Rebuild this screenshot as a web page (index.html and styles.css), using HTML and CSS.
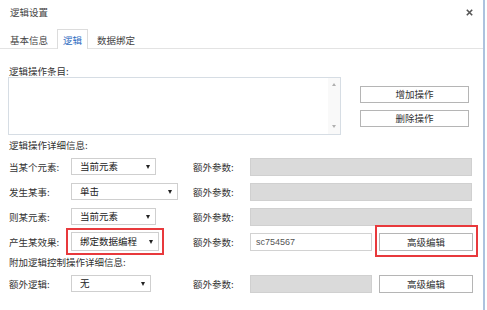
FILE: index.html
```html
<!DOCTYPE html>
<html>
<head>
<meta charset="utf-8">
<link rel="stylesheet" href="styles.css">
</head>
<body>
<div class="dialog">
  <div class="header">
    <span class="title">逻辑设置</span>
    <span class="close"><svg width="7" height="7" viewBox="0 0 7 7"><path d="M0.8 0.8L6.2 6.2M6.2 0.8L0.8 6.2" stroke="#555" stroke-width="1.6" fill="none"/></svg></span>
  </div>
  <div class="tabs">
    <div class="tab">基本信息</div>
    <div class="tab active">逻辑</div>
    <div class="tab">数据绑定</div>
  </div>
  <div class="content">
    <div class="label sec1">逻辑操作条目:</div>
    <div class="ops">
      <div class="listbox">
        <div class="scroll"><span class="up"></span><span class="down"></span></div>
      </div>
      <div class="opbtns">
        <div class="btn opbtn">增加操作</div>
        <div class="btn opbtn">删除操作</div>
      </div>
    </div>
    <div class="label sec2">逻辑操作详细信息:</div>
    <div class="grid">
      <div class="label">当某个元素:</div>
      <div class="select w85">当前元素<span class="arrow"></span></div>
      <div class="label">额外参数:</div>
      <div class="field"><div class="input disabled full"></div></div>

      <div class="label">发生某事:</div>
      <div class="select w107">单击<span class="arrow"></span></div>
      <div class="label">额外参数:</div>
      <div class="field"><div class="input disabled full"></div></div>

      <div class="label">则某元素:</div>
      <div class="select w85">当前元素<span class="arrow"></span></div>
      <div class="label">额外参数:</div>
      <div class="field"><div class="input disabled full"></div></div>

      <div class="label">产生某效果:</div>
      <div class="select w88 tall marked-select">绑定数据编程<span class="arrow"></span></div>
      <div class="label">额外参数:</div>
      <div class="field">
        <div class="input half value">sc754567</div>
        <div class="btn edit marked-btn">高级编辑</div>
      </div>
    </div>
    <div class="label sec3">附加逻辑控制操作详细信息:</div>
    <div class="grid">
      <div class="label">额外逻辑:</div>
      <div class="select w80">无<span class="arrow"></span></div>
      <div class="label">额外参数:</div>
      <div class="field">
        <div class="input disabled half"></div>
        <div class="btn edit">高级编辑</div>
      </div>
    </div>
  </div>
</div>
</body>
</html>
```

FILE: styles.css
```css
html, body {
  margin: 0;
  padding: 0;
  background: #fff;
}

body {
  font-family: "Noto Sans CJK SC", "Noto Sans", sans-serif;
  font-size: 9.5px;
  color: #333;
}

.dialog {
  width: 483px;
  height: 310px;
  border-right: 2px solid #adc2de;
  overflow: hidden;
}

.header {
  height: 29px;
  box-sizing: border-box;
  padding: 6px 10px 0 10px;
  display: flex;
  justify-content: space-between;
  align-items: flex-start;
}

.title {
  line-height: 13px;
  color: #444;
}

.close {
  margin-top: 3px;
  width: 7px;
  height: 7px;
  display: block;
}

.close svg {
  display: block;
}

.tabs {
  height: 20px;
  box-sizing: border-box;
  border-bottom: 1px solid #e3e3e3;
  display: flex;
  gap: 3px;
  padding-left: 4px;
}

.tab {
  height: 19px;
  box-sizing: border-box;
  padding: 2px 5px 0 5px;
  line-height: 17px;
  border: 1px solid transparent;
  border-bottom: none;
  color: #444;
}

.tab.active {
  height: 20px;
  border-color: #dcdcdc;
  background: #fff;
  color: #2f6cbf;
}

.content {
  padding-left: 8px;
}

.label {
  line-height: 12px;
  white-space: nowrap;
  color: #333;
}

.sec1 {
  padding: 16px 0 0 1px;
}

.sec2 {
  padding: 4px 0 3px 1px;
}

.sec3 {
  padding-left: 1px;
  line-height: 17px;
}

.ops {
  display: flex;
  align-items: flex-start;
}

.listbox {
  width: 333px;
  height: 58px;
  box-sizing: border-box;
  border: 1px solid #d6dde4;
  position: relative;
  display: flex;
  justify-content: flex-end;
}

.scroll {
  width: 12px;
  display: flex;
  flex-direction: column;
  justify-content: space-between;
  align-items: center;
  padding: 5px 0 6px;
  box-sizing: border-box;
  background: #f9f9f9;
}

.up, .down {
  width: 0;
  height: 0;
  border-left: 2px solid transparent;
  border-right: 2px solid transparent;
}

.up {
  border-bottom: 3px solid #b0b0b0;
}

.down {
  border-top: 3px solid #b0b0b0;
}

.opbtns {
  margin: 9px 0 0 19px;
  display: flex;
  flex-direction: column;
  gap: 7px;
}

.btn {
  box-sizing: border-box;
  height: 17px;
  border: 1px solid #b5b5b5;
  background: #fff;
  text-align: center;
  line-height: 15px;
  color: #333;
}

.opbtn {
  width: 109px;
}

.grid {
  margin-left: 1px;
  display: grid;
  grid-template-columns: 62px 122px 57px 1fr;
  grid-auto-rows: 25px;
  align-items: center;
}

.select {
  position: relative;
  box-sizing: border-box;
  height: 17px;
  border: 1px solid #cfcfcf;
  background: #fff;
  padding-left: 8px;
  line-height: 15px;
  color: #222;
}

.select.tall {
  height: 19px;
  line-height: 17px;
}

.w80 { width: 80px; }
.w85 { width: 85px; }
.w88 { width: 88px; }
.w107 { width: 107px; }

.arrow {
  position: absolute;
  right: 5px;
  top: 50%;
  margin-top: -2px;
  width: 0;
  height: 0;
  border-left: 2.5px solid transparent;
  border-right: 2.5px solid transparent;
  border-top: 4px solid #222;
}

.field {
  display: flex;
  align-items: center;
  gap: 7px;
}

.input {
  box-sizing: border-box;
  height: 18px;
  border: 1px solid #d2d2d2;
  background: #fff;
}

.input.disabled {
  background: #dadada;
  border-color: #d0d0d0;
}

.input.full {
  width: 222px;
}

.input.half {
  width: 122px;
}

.input.value {
  font-family: "Liberation Sans", Arial, sans-serif;
  font-size: 9px;
  color: #555;
  padding-left: 5px;
  line-height: 16px;
}

.edit {
  width: 94px;
  height: 18px;
  line-height: 16px;
}

.marked-select,
.marked-btn {
  position: relative;
}

.marked-select::after,
.marked-btn::after {
  content: "";
  position: absolute;
  border: 2px solid #e8393c;
  pointer-events: none;
}

.marked-select::after {
  left: -6px;
  right: -6px;
  top: -5px;
  bottom: -5px;
}

.marked-btn::after {
  left: -5px;
  right: -6px;
  top: -9px;
  bottom: -7px;
}
```
